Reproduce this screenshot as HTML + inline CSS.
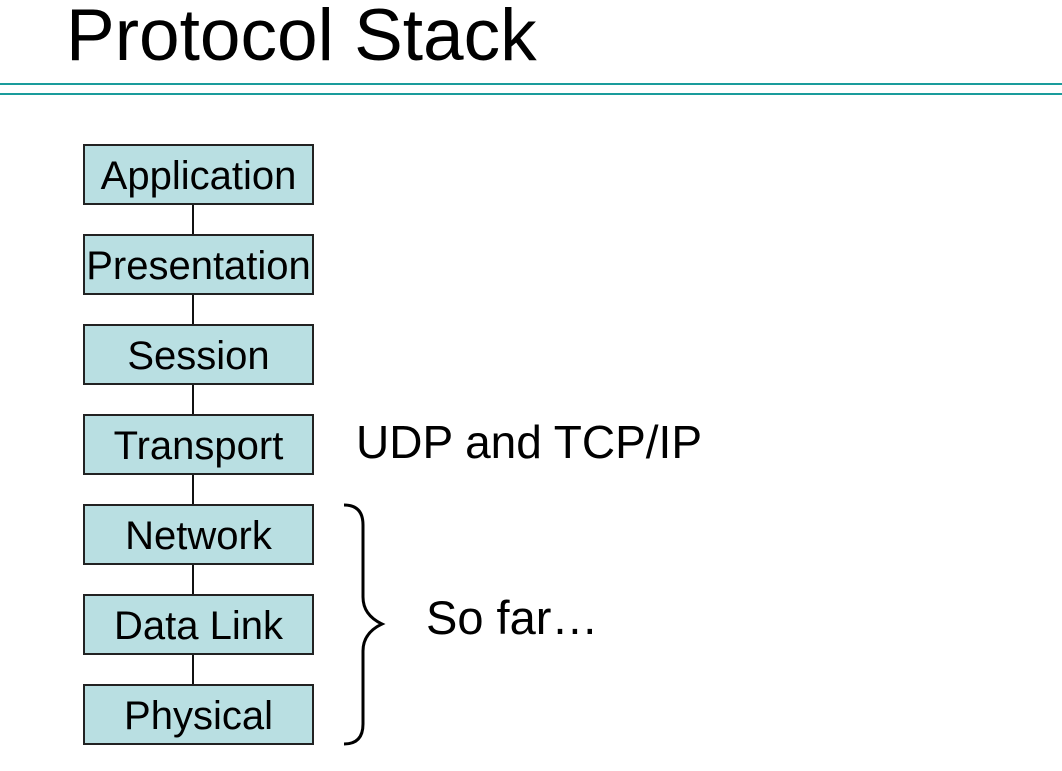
<!DOCTYPE html>
<html><head><style>
body{margin:0;width:1062px;height:771px;background:#fff;position:relative;overflow:hidden;font-family:"Liberation Sans",Arial,sans-serif;color:#000}
.t{position:absolute;left:66px;top:-1px;font-size:73px;line-height:1}
.ln{position:absolute;left:0;width:1062px;height:2px;background:#1a9c9c}
.b{position:absolute;left:83px;width:227px;height:54px;border:2px solid #222;background:#b9dfe2;display:flex;align-items:center;justify-content:center;font-size:40px;white-space:nowrap;padding-top:3px;box-sizing:content-box}
.v{position:absolute;left:192px;width:2px;background:#111}
.lab{position:absolute;font-size:46px;line-height:1}
</style></head><body>
<div class="t">Protocol Stack</div>
<div class="ln" style="top:83px"></div>
<div class="ln" style="top:93px"></div>
<div class="v" style="top:200px;height:500px"></div>
<div class="b" style="top:144px">Application</div>
<div class="b" style="top:234px">Presentation</div>
<div class="b" style="top:324px">Session</div>
<div class="b" style="top:414px">Transport</div>
<div class="b" style="top:504px">Network</div>
<div class="b" style="top:594px">Data Link</div>
<div class="b" style="top:684px">Physical</div>
<div class="lab" style="left:356px;top:419px">UDP and TCP/IP</div>
<div class="lab" style="left:426px;top:594px;font-size:47px">So far…</div>
<svg style="position:absolute;left:0;top:0" width="1062" height="771">
<path d="M344 505 Q363 505 363 525 L363 597 Q363 615 382 624 Q363 633 363 651 L363 724 Q363 744 344 744" fill="none" stroke="#000" stroke-width="3"/>
</svg>
</body></html>
